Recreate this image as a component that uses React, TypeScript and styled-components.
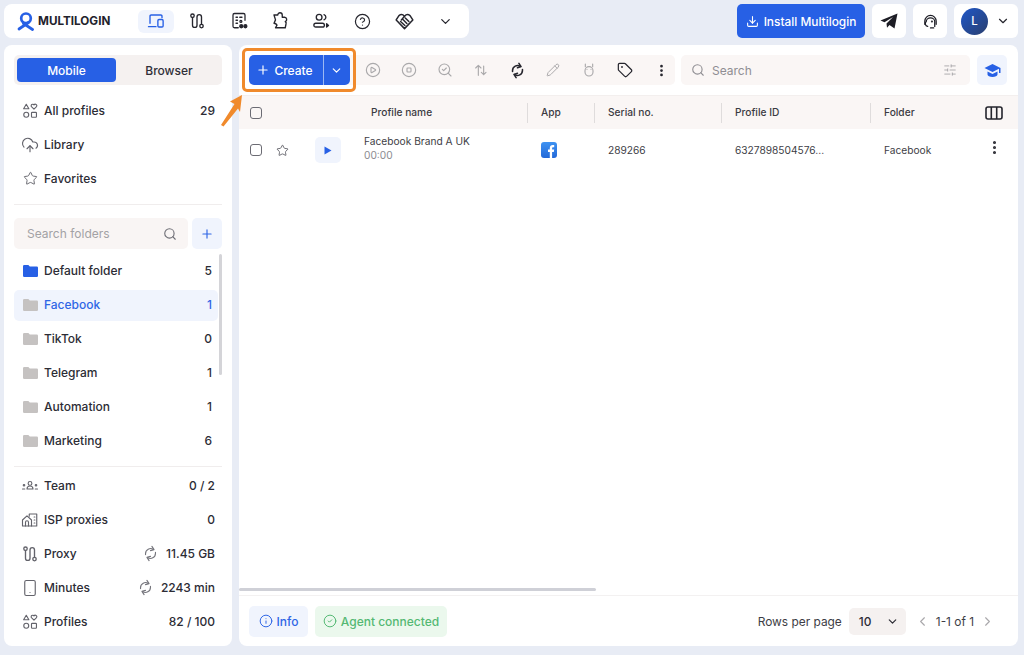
import React from "react";
import styled, { createGlobalStyle } from "styled-components";
import {
  ChevronDown, ChevronLeft, ChevronRight, CircleHelp, CirclePlay, CircleStop, CloudUpload, Download,
  EllipsisVertical, Info, CircleCheck, Pencil, Plus, Search, SearchCheck, SlidersHorizontal, Smartphone,
  Star, Tag,
} from "lucide-react";

const Global = createGlobalStyle`
  html, body { margin: 0; padding: 0; background: #e8ecf5; }
  body { font-family: Inter, "Liberation Sans", sans-serif; color: #2a2a33; width: 1024px; height: 655px; overflow: hidden; }
  * { box-sizing: border-box; }
`;

const Page = styled.div`
  position: relative; width: 1024px; height: 655px; padding: 4px 6px 9px 4px;
  display: flex; flex-direction: column; gap: 7px;
`;
const TopRow = styled.header`display: flex; height: 34px; align-items: stretch;`;
const TopNav = styled.nav`
  width: 465px; background: #fff; border-radius: 8px; display: flex; align-items: center; padding-left: 13px;
`;
const Logo = styled.div`display: flex; align-items: center; gap: 3px; width: 122px;`;
const LogoText = styled.span`font-size: 11.7px; font-weight: 700; color: #23232c; letter-spacing: 0;`;
const NavIcon = styled.span<{ $active?: boolean }>`
  width: 36px; height: 23px; margin-right: 5.7px; border-radius: 6px; display: flex; align-items: center; justify-content: center;
  background: ${p => (p.$active ? "#f0f4fd" : "transparent")};
  color: ${p => (p.$active ? "#2760e5" : "#26262e")};
`;
const TopRight = styled.div`margin-left: auto; display: flex; gap: 7px;`;
const InstallButton = styled.button`
  width: 128px; border: 0; border-radius: 5px; background: #2760e5; color: #fff; font: 500 11.9px Inter, sans-serif;
  display: flex; align-items: center; justify-content: center; gap: 5px; padding: 0;
`;
const SquareButton = styled.div`
  width: 34px; background: #fff; border-radius: 6px; display: flex; align-items: center; justify-content: center; color: #1d1d25;
`;
const UserBox = styled.div`
  width: 64px; background: #fff; border-radius: 6px; display: flex; align-items: center; gap: 8px; padding-left: 7px; color: #26262e;
`;
const Avatar = styled.div`
  width: 27px; height: 27px; border-radius: 50%; background: linear-gradient(135deg, #1f57c8, #2a3f6e); color: #fff;
  font-size: 11.5px; font-weight: 500; display: flex; align-items: center; justify-content: center;
`;
const Body = styled.div`flex: 1; display: flex; gap: 7px; min-height: 0;`;
const Sidebar = styled.aside`
  width: 228px; background: #fff; border-radius: 8px; padding: 10px 10px 0; display: flex; flex-direction: column;
`;
const Toggle = styled.div`
  height: 30px; background: #f5f1f0; border-radius: 5px; padding: 3px; display: grid; grid-template-columns: 99px 1fr; margin-bottom: 9px;
`;
const ToggleItem = styled.div<{ $active?: boolean }>`
  border-radius: 4px; display: flex; align-items: center; justify-content: center; font-size: 12px; font-weight: 500;
  padding-left: ${p => (p.$active ? "0" : "3px")};
  background: ${p => (p.$active ? "#2760e5" : "transparent")};
  color: ${p => (p.$active ? "#fff" : "#2f2f38")};
`;
const SideRow = styled.div<{ $selected?: boolean; $inset?: boolean }>`
  height: ${p => (p.$selected ? "31px" : "34px")};
  margin: ${p => (p.$selected ? "1.5px 0" : "0")};
  width: ${p => (p.$inset ? "204px" : "auto")};
  padding: 0 ${p => (p.$inset ? "6px" : "7px")} 1px 7px; display: flex; align-items: center; gap: 5px;
  font-size: 12px; font-weight: 500; border-radius: 5px;
  background: ${p => (p.$selected ? "#f0f4fd" : "transparent")};
  color: ${p => (p.$selected ? "#2f66e6" : "#2c2c35")};
`;
const SideIcon = styled.span`width: 18px; height: 18px; display: flex; align-items: center; justify-content: center; color: #63636b; flex: none;`;
const Value = styled.span`margin-left: auto; display: flex; align-items: center; gap: 7px;`;
const GreyIcon = styled.span`display: flex; color: #75757c;`;
const Divider = styled.div`height: 1px; margin-top: 8px; background: #f0eded;`;
const FolderTools = styled.div`display: flex; gap: 4px; margin: 13px 0 5px;`;
const FolderSearch = styled.div`
  width: 174px; height: 31px; background: #f9f5f4; border-radius: 5px; padding: 0 11px 0 13px; display: flex; align-items: center;
  justify-content: space-between; color: #a3a2a5; font-size: 12px;
`;
const SmallAdd = styled.div`
  width: 30px; height: 31px; background: #f0f4fd; border-radius: 5px; color: #2f66e6; display: flex; align-items: center; justify-content: center;
`;
const FolderArea = styled.div`position: relative; height: 213px; border-bottom: 1px solid #f0eded; margin-bottom: 2px;`;
const ScrollThumb = styled.div`position: absolute; right: 0; top: 0; width: 3px; height: 121px; background: #d4d4d8; border-radius: 2px;`;
const Main = styled.main`
  flex: 1; background: #fff; border-radius: 8px; display: flex; flex-direction: column; min-width: 0;
`;
const Toolbar = styled.div`height: 50px; padding: 10px 11px 10px 10px; display: flex; gap: 6px;`;
const ToolGroup = styled.div`display: flex; width: 426px; background: #faf6f5; border-radius: 5px;`;
const CreateButton = styled.div`
  flex: none; width: 74px; background: #2760e5; color: #fff; font-size: 12px; font-weight: 500; border-radius: 5px 0 0 5px;
  display: flex; align-items: center; justify-content: center; gap: 4px; padding-right: 3px;
`;
const CreateSplit = styled.div`
  flex: none; width: 27px; background: #2760e5; color: #fff; border-left: 1px solid #9cb8f3; border-radius: 0 5px 5px 0;
  display: flex; align-items: center; justify-content: center; padding-right: 1px;
`;
const ToolIcons = styled.div`flex: 1; min-width: 0; display: flex; align-items: center; padding-left: 5px;`;
const ToolIcon = styled.span<{ $on?: boolean }>`
  flex: none; width: 36px; display: flex; justify-content: center; color: ${p => (p.$on ? "#25252d" : "#aaa9ab")};
`;
const SearchBox = styled.div`
  flex: 1; background: #faf6f5; border-radius: 5px; display: flex; align-items: center; padding: 0 13px 0 10px; gap: 7px;
  color: #8f8e93; font-size: 12px;
`;
const SearchTuner = styled.span`margin-left: auto; display: flex; color: #a5a4a7;`;
const LearnButton = styled.div`
  width: 30px; margin-left: 1px; background: #f0f4fd; border-radius: 5px; display: flex; align-items: center; justify-content: center; color: #2760e5;
`;
const columns = "30px 26px 66px 166px 67px 127px 149px 1fr 48px";
const HeadRow = styled.div`
  height: 34px; background: #faf6f5; display: grid; grid-template-columns: ${columns}; align-items: center;
  font-size: 10.2px; font-weight: 500; color: #3a3a42; border-top: 1px solid #f3efee;
`;
const HeadCell = styled.div<{ $line?: boolean; $indent?: number }>`
  height: 20px; display: flex; align-items: center; padding: 0 0 1px ${p => p.$indent ?? 13}px;
  border-left: ${p => (p.$line ? "1px solid #dfdcdc" : "0")};
`;
const CenterCell = styled.div<{ $left?: number; $lift?: number }>`
  display: flex; justify-content: center; padding-left: ${p => p.$left ?? 0}px; padding-bottom: ${p => p.$lift ?? 0}px; color: #5a5a62;
`;
const DataRow = styled.div`
  height: 42px; display: grid; grid-template-columns: ${columns}; align-items: center; font-size: 10.2px; color: #3d3d45;
`;
const Check = styled.span`
  width: 12px; height: 12px; border: 1.3px solid #6b6b73; border-radius: 3px; display: block;
`;
const PlayButton = styled.div`
  width: 26px; height: 26px; margin-left: 20px; background: #f0f4fd; border-radius: 5px; display: flex; align-items: center; justify-content: center;
`;
const NameCell = styled.div`padding: 0 0 4px 3px; display: flex; flex-direction: column; gap: 1px; line-height: 13px;`;
const Timer = styled.span`color: #8d8c91;`;
const Cell = styled.div<{ $indent?: number }>`padding-left: ${p => p.$indent ?? 14}px;`;
const Spacer = styled.div`flex: 1;`;
const HBar = styled.div`height: 3px; width: 357px; background: #cfd0d7; border-radius: 2px; margin-bottom: 4px;`;
const Footer = styled.footer`
  height: 51px; border-top: 1px solid #f3f1f1; padding: 10px 23px 9px 10px; display: flex; align-items: stretch; gap: 7px; font-size: 12px;
`;
const Pill = styled.div<{ $bg: string; $fg: string; $width: number }>`
  display: flex; align-items: center; justify-content: center; gap: 4px; width: ${p => p.$width}px; padding-bottom: 1px; border-radius: 5px; font-weight: 500;
  background: ${p => p.$bg}; color: ${p => p.$fg};
`;
const Pager = styled.div`margin-left: auto; display: flex; align-items: center; color: #3d3d45; font-size: 11.9px; padding-bottom: 1px;`;
const RowsSelect = styled.div`
  width: 57px; height: 27px; background: #f5f1f0; border-radius: 5px; margin: 0 9px 0 7px; padding: 0 7px 0 10px; display: flex; align-items: center;
  justify-content: space-between; font-weight: 500; color: #2c2c35;
`;
const PageArrow = styled.span`display: flex; color: #a9a8ab;`;
const PageText = styled.span`margin: 0 6px;`;
const Callout = styled.div`
  position: absolute; left: 242px; top: 48px; width: 114px; height: 44px; border: 3px solid #f08a2c; border-radius: 5px; pointer-events: none;
`;
const Arrow = styled.svg`position: absolute; left: 218px; top: 92px;`;

const Svg = ({ s = 18, children, fill = "none", sw = 1.6 }: { s?: number; children: React.ReactNode; fill?: string; sw?: number }) => (
  <svg width={s} height={s} viewBox="0 0 24 24" fill={fill} stroke={fill === "none" ? "currentColor" : "none"} strokeWidth={sw} strokeLinecap="round" strokeLinejoin="round">{children}</svg>
);
const ProxyGlyph = ({ s = 18 }: { s?: number }) => (
  <Svg s={s} sw={1.8}>
    <path d="M6 8v9.500a3 3 0 0 0 6 0v-11a3 3 0 0 1 6 0V16" />
    <circle cx="6" cy="5" r="2.300" /><circle cx="18" cy="18.800" r="2.300" />
  </Svg>
);
const ShapesGlyph = () => (
  <Svg s={18} sw={1.5}>
    <path d="M7 3l3.500 6h-7z" /><circle cx="7" cy="17" r="3.300" /><rect x="14" y="13.800" width="6.600" height="6.600" rx="1" />
    <path d="M17.300 9.500l-3.400-3.300a2 2 0 0 1 3.400-2.300 2 2 0 0 1 3.400 2.300z" />
  </Svg>
);
const FolderGlyph = ({ color }: { color: string }) => (
  <svg width="15" height="12" viewBox="0 0 15 12"><path fill={color} d="M1.200 0h4.200l1.400 1.600h7a1.200 1.200 0 0 1 1.200 1.200v8A1.200 1.200 0 0 1 13.800 12H1.200A1.200 1.200 0 0 1 0 10.800V1.200A1.200 1.200 0 0 1 1.200 0z" /></svg>
);
const Sync = ({ s = 18, sw = 1.6 }: { s?: number; sw?: number }) => (
  <Svg s={s} sw={sw}>
    <path d="M5 13.500V12a7 7 0 0 1 11-5.700" /><path d="M14 2l3 4.500-5 1.500" />
    <path d="M19 10.500V12a7 7 0 0 1-11 5.700" /><path d="M10 22l-3-4.500 5-1.500" />
  </Svg>
);

const folders: [string, number][] = [
  ["Default folder", 5], ["Facebook", 1], ["TikTok", 0], ["Telegram", 1], ["Automation", 1], ["Marketing", 6],
];

export default function App() {
  return (
    <Page>
      <Global />
      <TopRow>
        <TopNav>
          <Logo>
            <svg width="18" height="19" viewBox="0 0 18 19" fill="none">
              <circle cx="9" cy="6.300" r="4.800" stroke="#2760e5" strokeWidth="2.700" />
              <path d="M2 17L11.500 10.500" stroke="#2760e5" strokeWidth="2.800" strokeLinecap="round" />
              <path d="M6.500 11.500L15.500 17.500" stroke="#2760e5" strokeWidth="2.800" strokeLinecap="round" />
            </svg>
            <LogoText>MULTILOGIN</LogoText>
          </Logo>
          <NavIcon $active>
            <Svg s={18} sw={1.8}><path d="M20 7.500V5.500A1.500 1.500 0 0 0 18.500 4H5.500A1.500 1.500 0 0 0 4 5.500V15" /><path d="M2 19.500h10" /><rect x="14.500" y="10" width="7" height="10" rx="1.500" /></Svg>
          </NavIcon>
          <NavIcon><ProxyGlyph /></NavIcon>
          <NavIcon>
            <Svg s={18} sw={1.7}><path d="M11 21H6a2 2 0 0 1-2-2V4a2 2 0 0 1 2-2h12a2 2 0 0 1 2 2v7" /><path d="M8 7h2M13 7h3M8 11h2M8 15h2" /><circle cx="14.500" cy="12.500" r="1.300" /><circle cx="15" cy="19" r="2" fill="currentColor" /><circle cx="20.500" cy="19" r="2" fill="currentColor" /></Svg>
          </NavIcon>
          <NavIcon>
            <Svg s={18} sw={1.8}><path d="M4 4h5a3 3 0 0 1 6 0v3h3a3 3 0 0 1 1 5.800c1.500 1 1.500 2.200 1 3.200l-1 5H6l2-3.500c-1-2-3-2.500-4-2.500l2-4.500z" /></Svg>
          </NavIcon>
          <NavIcon>
            <Svg s={18} sw={1.8}><circle cx="9.500" cy="7" r="3.800" /><rect x="2.500" y="15" width="14" height="5" rx="2.500" /><path d="M16 3.500a3.700 3.700 0 0 1 0 7" /><path fill="currentColor" d="M19.500 15.500l2.500 2.500-2.500 2z" /></Svg>
          </NavIcon>
          <NavIcon><CircleHelp size={17} strokeWidth={1.7} /></NavIcon>
          <NavIcon>
            <Svg s={19} sw={1.9}><path d="M12 5.500C14 3 17 3 19 4.500L22.500 10 12 21 1.500 10 5 4.500C7 3 10 3 12 5.500z" /><path d="M12 5.500L8 10M7 12l5.500 5M10 9.500l5 5M13 7.500l4.500 4.500" /></Svg>
          </NavIcon>
          <NavIcon><ChevronDown size={15} strokeWidth={2} /></NavIcon>
        </TopNav>
        <TopRight>
          <InstallButton><Download size={13} strokeWidth={2} />Install Multilogin</InstallButton>
          <SquareButton>
            <svg width="18" height="16" viewBox="0 0 18 16"><path fill="#1d1d25" d="M0.500 7.500L17.500 0.500L14.500 15.500L9.500 12L7 14.800L6.500 10.500L13 4L4.500 9.200z" /></svg>
          </SquareButton>
          <SquareButton>
            <Svg s={17} sw={1.8}><path d="M4 16v-4.500a8 8 0 0 1 16 0V16" /><path d="M8 19a4 4 0 0 1-2-7c0-3 3-5 6-5s6 2 6 5v7" /><path d="M12 21h4.500" /><circle cx="14" cy="12" r=".6" /></Svg>
          </SquareButton>
          <UserBox>
            <Avatar>L</Avatar>
            <ChevronDown size={14} strokeWidth={2} />
          </UserBox>
        </TopRight>
      </TopRow>
      <Body>
        <Sidebar>
          <Toggle>
            <ToggleItem $active>Mobile</ToggleItem>
            <ToggleItem>Browser</ToggleItem>
          </Toggle>
          <SideRow><SideIcon><ShapesGlyph /></SideIcon>All profiles<Value>29</Value></SideRow>
          <SideRow><SideIcon><CloudUpload size={18} strokeWidth={1.5} /></SideIcon>Library</SideRow>
          <SideRow><SideIcon><Star size={15} strokeWidth={1.5} /></SideIcon>Favorites</SideRow>
          <Divider />
          <FolderTools>
            <FolderSearch>Search folders<Search size={14} strokeWidth={1.9} color="#6e6e75" /></FolderSearch>
            <SmallAdd><Plus size={14} strokeWidth={2} /></SmallAdd>
          </FolderTools>
          <FolderArea>
            <ScrollThumb />
            {folders.map(([name, n], i) => (
              <SideRow key={name} $inset $selected={name === "Facebook"}>
                <SideIcon><FolderGlyph color={i === 0 ? "#2760e5" : "#c5c2c1"} /></SideIcon>
                {name}<Value>{n}</Value>
              </SideRow>
            ))}
          </FolderArea>
          <SideRow>
            <SideIcon>
              <Svg s={18} sw={1.5}><circle cx="12" cy="8.500" r="2.500" /><path d="M8 16a4 4 0 0 1 8 0z" /><circle cx="4" cy="11" r="1" /><path d="M2 16h3" /><circle cx="20" cy="11" r="1" /><path d="M19 16h3" /></Svg>
            </SideIcon>Team<Value>0 / 2</Value>
          </SideRow>
          <SideRow>
            <SideIcon>
              <Svg s={18} sw={1.5}><path d="M2 20v-8l6-5.500 6 5.500v8z" /><path d="M6 20v-5a2 2 0 0 1 4 0v5" /><path d="M11 7V4h10v16h-7" /><path d="M17.500 8h1M17.500 12h1M17.500 16h1" /></Svg>
            </SideIcon>ISP proxies<Value>0</Value>
          </SideRow>
          <SideRow><SideIcon><ProxyGlyph /></SideIcon>Proxy<Value><GreyIcon><Sync s={17} /></GreyIcon>11.45 GB</Value></SideRow>
          <SideRow><SideIcon><Smartphone size={18} strokeWidth={1.5} /></SideIcon>Minutes<Value><GreyIcon><Sync s={17} /></GreyIcon>2243 min</Value></SideRow>
          <SideRow><SideIcon><ShapesGlyph /></SideIcon>Profiles<Value>82 / 100</Value></SideRow>
        </Sidebar>
        <Main>
          <Toolbar>
            <ToolGroup>
              <CreateButton><Plus size={14} strokeWidth={2} />Create</CreateButton>
              <CreateSplit><ChevronDown size={13} strokeWidth={2.2} /></CreateSplit>
              <ToolIcons>
                <ToolIcon><CirclePlay size={16} strokeWidth={1.7} /></ToolIcon>
                <ToolIcon><CircleStop size={16} strokeWidth={1.7} /></ToolIcon>
                <ToolIcon><SearchCheck size={16} strokeWidth={1.7} /></ToolIcon>
                <ToolIcon>
                  <Svg s={16} sw={1.7}><path d="M8 20V5M4 9l4-4 4 4" /><path d="M16 6v13M12.500 15.500L16 19l3.500-3.500" /></Svg>
                </ToolIcon>
                <ToolIcon $on><Sync s={17} sw={2.2} /></ToolIcon>
                <ToolIcon><Pencil size={14} strokeWidth={1.7} /></ToolIcon>
                <ToolIcon>
                  <Svg s={16} sw={1.7}><path d="M6.500 3v4M17.500 3v4" /><rect x="6" y="7" width="12" height="14" rx="6" /><path d="M9 11h.01M15 11h.01" /></Svg>
                </ToolIcon>
                <ToolIcon $on><Tag size={16} strokeWidth={1.8} /></ToolIcon>
                <ToolIcon $on><EllipsisVertical size={15} strokeWidth={2.4} /></ToolIcon>
              </ToolIcons>
            </ToolGroup>
            <SearchBox>
              <Search size={14} strokeWidth={1.9} />Search
              <SearchTuner><SlidersHorizontal size={14} strokeWidth={1.5} /></SearchTuner>
            </SearchBox>
            <LearnButton>
              <svg width="17" height="15" viewBox="0 0 17 15"><path fill="currentColor" d="M8.500 1L0.500 5l8 4 6.500-3.300V10h1.500V5zM3.500 8.600v2.900c0 1.300 2.300 2.500 5 2.500s5-1.200 5-2.500V8.600l-5 2.500z" /></svg>
            </LearnButton>
          </Toolbar>
          <HeadRow>
            <CenterCell $left={4}><Check /></CenterCell>
            <div />
            <div />
            <HeadCell $indent={10}>Profile name</HeadCell>
            <HeadCell $line>App</HeadCell>
            <HeadCell $line>Serial no.</HeadCell>
            <HeadCell $line>Profile ID</HeadCell>
            <HeadCell $line>Folder</HeadCell>
            <CenterCell>
              <svg width="18" height="14" viewBox="0 0 18 14" fill="none" stroke="#25252d" strokeWidth="1.600"><rect x="1" y="1" width="16" height="12" rx="2" /><path d="M6.300 1v12M11.700 1v12" /></svg>
            </CenterCell>
          </HeadRow>
          <DataRow>
            <CenterCell $left={4}><Check /></CenterCell>
            <CenterCell><Star size={13} strokeWidth={1.6} /></CenterCell>
            <PlayButton>
              <svg width="8" height="9" viewBox="0 0 8 9"><path fill="#2760e5" d="M0.500 0.500l7 4-7 4z" /></svg>
            </PlayButton>
            <NameCell>Facebook Brand A UK<Timer>00:00</Timer></NameCell>
            <Cell>
              <svg width="16" height="16" viewBox="0 0 16 16" style={{ display: "block" }}>
                <defs><linearGradient id="fb" x1="0" y1="0" x2="0" y2="1"><stop offset="0" stopColor="#3f93f2" /><stop offset="1" stopColor="#2268d8" /></linearGradient></defs>
                <rect width="16" height="16" rx="3" fill="url(#fb)" /><path fill="#fff" d="M8.800 16v-6H7V7.600h1.800V6c0-2 1.200-3 2.900-3h1.500v2.300h-1c-.8 0-1.100.4-1.100 1.100v1.200h2.100L12.800 10H11.100v6z" />
              </svg>
            </Cell>
            <Cell>289266</Cell>
            <Cell>6327898504576...</Cell>
            <Cell>Facebook</Cell>
            <CenterCell $lift={6}><EllipsisVertical size={17} strokeWidth={2.4} color="#33333b" /></CenterCell>
          </DataRow>
          <Spacer />
          <HBar />
          <Footer>
            <Pill $bg="#f0f4fd" $fg="#2f66e6" $width={59}><Info size={14} strokeWidth={1.7} />Info</Pill>
            <Pill $bg="#ebf8ed" $fg="#54b873" $width={132}><CircleCheck size={14} strokeWidth={1.7} />Agent connected</Pill>
            <Pager>
              Rows per page
              <RowsSelect>10<ChevronDown size={13} strokeWidth={2.2} /></RowsSelect>
              <PageArrow><ChevronLeft size={15} strokeWidth={1.8} /></PageArrow>
              <PageText>1-1 of 1</PageText>
              <PageArrow><ChevronRight size={15} strokeWidth={1.8} /></PageArrow>
            </Pager>
          </Footer>
        </Main>
      </Body>
      <Callout />
      <Arrow width="28" height="36" viewBox="0 0 28 36">
        <path fill="#f08a2c" d="M24 3L12 9.500 16.500 12 3 33l2.500 1.500L20 16.500 22 20z" />
      </Arrow>
    </Page>
  );
}
